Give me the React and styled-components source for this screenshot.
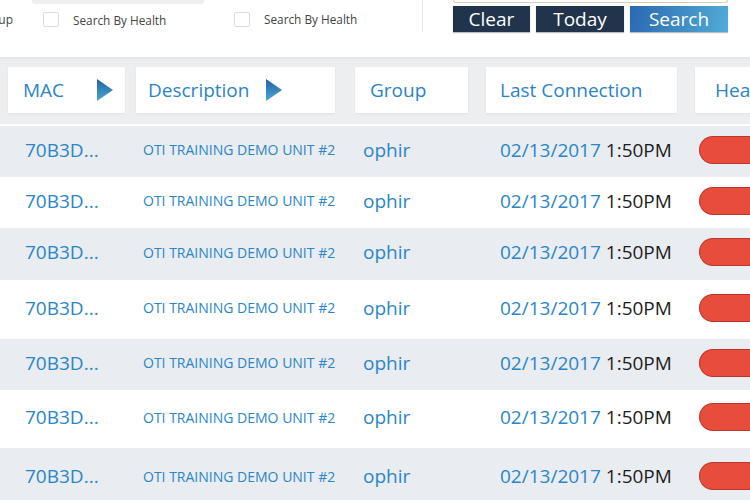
import React from 'react';
import styled, { createGlobalStyle } from 'styled-components';

const GlobalStyle = createGlobalStyle`
    body {
        margin: 0;
        background: #ffffff;
        font-family: "Open Sans", "Noto Sans", sans-serif;
        overflow: hidden;
    }
`;

const Page = styled.div`
    width: 750px;
    height: 500px;
    overflow: hidden;
    background: #eceef0;
`;

// 상단 검색 영역
const TopBar = styled.div`
    display: flex;
    height: 57px;
    background: #ffffff;
    border-bottom: 2px solid #e4e8eb;
`;

const Filters = styled.div`
    display: flex;
    width: 422px;
    height: 32px;
    border-right: 1px solid #e6e6e6;
`;

const FilterCol = styled.div`
    width: ${(p) => p.width}px;
    display: flex;
    flex-direction: column;
`;

const InputEdge = styled.div`
    margin-left: 32px;
    width: 172px;
    height: 4px;
    background: ${(p) => (p.empty ? 'transparent' : '#efefef')};
    border-radius: 0 0 3px 3px;
`;

const CheckRow = styled.div`
    display: flex;
    align-items: center;
    margin-top: 7px;
    padding-left: ${(p) => p.indent || 0}px;
`;

const ClippedLabel = styled.div`
    width: 13px;
    margin-right: 30px;
    display: flex;
    justify-content: flex-end;
    overflow: hidden;
    white-space: nowrap;
    font-size: 12px;
    color: #444;
`;

const Checkbox = styled.span`
    box-sizing: border-box;
    width: 16px;
    height: 15px;
    border: 1px solid #dcdcdc;
    border-radius: 2px;
    background: #fff;
`;

const FilterLabel = styled.span`
    margin-left: 14px;
    font-size: 11.8px;
    color: #444;
    white-space: nowrap;
`;

const Actions = styled.div`
    margin-left: 30px;
    display: flex;
    flex-direction: column;
`;

const SearchInputEdge = styled.div`
    box-sizing: border-box;
    width: 275px;
    height: 3px;
    border: 1px solid #d6ccbb;
    border-top: none;
    border-radius: 0 0 3px 3px;
`;

const ButtonRow = styled.div`
    display: flex;
    gap: 6px;
    margin-top: 3px;
`;

const ActionButton = styled.button`
    width: ${(p) => p.width}px;
    height: 26px;
    padding: 0;
    border: none;
    border-radius: 0;
    font-family: "Open Sans", "Noto Sans", sans-serif;
    font-size: 19px;
    line-height: 26px;
    color: #ffffff;
    background: ${(p) => (p.primary ? 'linear-gradient(100deg, #2a69b2, #52abd6)' : '#22344b')};
    box-shadow: 0 1px 1px rgba(0, 0, 0, 0.25);
`;

// 표 헤더
const COLUMNS = '136px 219px 131px 209px 1fr';

const HeaderBand = styled.div`
    display: grid;
    grid-template-columns: ${COLUMNS};
    align-items: start;
    padding: 8px 0 11px 0;
    border-bottom: 2px solid #ffffff;
`;

const HeaderCell = styled.div`
    box-sizing: border-box;
    display: flex;
    align-items: center;
    width: ${(p) => p.width};
    height: 46px;
    margin-left: ${(p) => p.offset || 0}px;
    padding-left: ${(p) => p.pad}px;
    background: #ffffff;
    box-shadow: 0 1px 2px rgba(0, 0, 0, 0.06);
    font-size: 19px;
    color: #2b84c7;
    white-space: nowrap;
    overflow: hidden;
`;

const SortArrow = styled.svg`
    margin-left: ${(p) => p.gap}px;
    flex-shrink: 0;
`;

// 표 본문
const Row = styled.div`
    display: grid;
    grid-template-columns: ${COLUMNS};
    align-items: center;
    height: ${(p) => p.h}px;
    background: ${(p) => (p.shaded ? '#e9ecf0' : '#ffffff')};
    padding-bottom: 4px;
    box-sizing: border-box;
`;

const Cell = styled.div`
    padding-left: ${(p) => p.pad}px;
    font-size: ${(p) => p.size || 19}px;
    color: #2a86c8;
    white-space: nowrap;
    overflow: hidden;
`;

const Time = styled.span`
    color: #1c1c1c;
`;

const HealthPill = styled.div`
    margin-left: 4px;
    width: 80px;
    height: 28px;
    box-sizing: border-box;
    border: 1px solid #b9372b;
    border-right: none;
    border-radius: 14px 0 0 14px;
    background: #e74c3c;
`;

const Arrow = ({ gap, id }) => (
    <SortArrow gap={gap} width="16" height="22" viewBox="0 0 16 22">
        <defs>
            <linearGradient id={id} x1="0" y1="0" x2="0" y2="1">
                <stop offset="0" stopColor="#2362a8" />
                <stop offset="1" stopColor="#4ca7d1" />
            </linearGradient>
        </defs>
        <polygon points="0,0 16,11 0,22" fill={`url(#${id})`} />
    </SortArrow>
);

const rowHeights = [51, 51, 52, 59, 51, 58, 60];

const App = () => {
    return (
        <Page>
            <GlobalStyle />
            <TopBar>
                <Filters>
                    <FilterCol width={205}>
                        <InputEdge />
                        <CheckRow>
                            <ClippedLabel>Search By Group</ClippedLabel>
                            <Checkbox />
                            <FilterLabel>Search By Health</FilterLabel>
                        </CheckRow>
                    </FilterCol>
                    <FilterCol width={217}>
                        <InputEdge empty />
                        <CheckRow indent={29}>
                            <Checkbox />
                            <FilterLabel>Search By Health</FilterLabel>
                        </CheckRow>
                    </FilterCol>
                </Filters>
                <Actions>
                    <SearchInputEdge />
                    <ButtonRow>
                        <ActionButton width={77}>Clear</ActionButton>
                        <ActionButton width={88}>Today</ActionButton>
                        <ActionButton width={98} primary>Search</ActionButton>
                    </ButtonRow>
                </Actions>
            </TopBar>

            <HeaderBand>
                <HeaderCell width="117px" offset={8} pad={15}>
                    MAC
                    <Arrow gap={33} id="arrowMac" />
                </HeaderCell>
                <HeaderCell width="199px" pad={12}>
                    Description
                    <Arrow gap={17} id="arrowDesc" />
                </HeaderCell>
                <HeaderCell width="113px" pad={15}>Group</HeaderCell>
                <HeaderCell width="191px" pad={14}>Last Connection</HeaderCell>
                <HeaderCell width="100%" pad={20}>Health</HeaderCell>
            </HeaderBand>

            {rowHeights.map((h, i) => (
                <Row key={i} h={h} shaded={i % 2 === 0}>
                    <Cell pad={25}>70B3D...</Cell>
                    <Cell pad={7} size={14}>OTI TRAINING DEMO UNIT #2</Cell>
                    <Cell pad={8}>ophir</Cell>
                    <Cell pad={14}>
                        02/13/2017 <Time>1:50PM</Time>
                    </Cell>
                    <HealthPill />
                </Row>
            ))}
        </Page>
    );
};

export default App;
